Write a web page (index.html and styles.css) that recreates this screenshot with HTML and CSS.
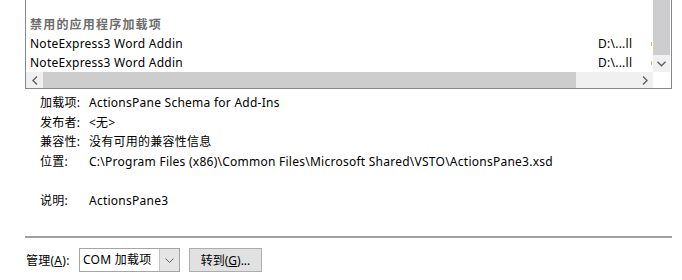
FILE: index.html
```html
<!DOCTYPE html>
<html lang="zh-CN">
<head>
    <meta charset="UTF-8">
    <title>COM 加载项</title>
    <link rel="stylesheet" href="styles.css">
</head>
<body>
    <div class="addin-list">
        <div class="list-body">
            <div class="group-header">禁用的应用程序加载项</div>
            <div class="list-row">
                <span class="col-name">NoteExpress3 Word Addin</span>
                <span class="col-path">D:\...ll</span>
                <span class="col-type"></span>
            </div>
            <div class="list-row">
                <span class="col-name">NoteExpress3 Word Addin</span>
                <span class="col-path">D:\...ll</span>
                <span class="col-type"></span>
            </div>
        </div>
        <div class="vscroll">
            <div class="vthumb"></div>
            <div class="arrow-btn">
                <svg width="9" height="6" viewBox="0 0 9 6"><path d="M0.5 0.8 L4.5 4.8 L8.5 0.8" fill="none" stroke="#606060" stroke-width="1.4"/></svg>
            </div>
        </div>
        <div class="hscroll">
            <div class="arrow-btn">
                <svg width="6" height="9" viewBox="0 0 6 9"><path d="M5 0.5 L1 4.5 L5 8.5" fill="none" stroke="#606060" stroke-width="1.4"/></svg>
            </div>
            <div class="hthumb"></div>
            <div class="htrack"></div>
            <div class="arrow-btn">
                <svg width="6" height="9" viewBox="0 0 6 9"><path d="M1 0.5 L5 4.5 L1 8.5" fill="none" stroke="#606060" stroke-width="1.4"/></svg>
            </div>
        </div>
        <div class="corner"></div>
    </div>

    <div class="details">
        <span class="label">加载项:</span><span>ActionsPane Schema for Add-Ins</span>
        <span class="label">发布者:</span><span>&lt;无&gt;</span>
        <span class="label">兼容性:</span><span>没有可用的兼容性信息</span>
        <span class="label">位置:</span><span>C:\Program Files (x86)\Common Files\Microsoft Shared\VSTO\ActionsPane3.xsd</span>
        <span class="label"></span><span></span>
        <span class="label">说明:</span><span>ActionsPane3</span>
    </div>

    <div class="separator"></div>

    <div class="manage-bar">
        <span class="manage-label">管理(<u>A</u>):</span>
        <div class="combo">
            <span class="combo-value">COM 加载项</span>
            <span class="combo-btn">
                <svg width="9" height="5" viewBox="0 0 9 5"><path d="M0.5 0.5 L4.5 4.5 L8.5 0.5" fill="none" stroke="#606060" stroke-width="1"/></svg>
            </span>
        </div>
        <button class="go-button">转到(<u>G</u>)...</button>
    </div>
</body>
</html>
```

FILE: styles.css
```css
body {
    margin: 0;
    padding: 0;
    background: #fff;
    font-family: "Noto Sans", "Noto Sans CJK SC", sans-serif;
    font-size: 12px;
    letter-spacing: 0.25px;
    color: #000;
}

.addin-list {
    box-sizing: border-box;
    width: 647px;
    height: 89px;
    margin-left: 25px;
    border: 1px solid #828790;
    border-top: none;
    padding-right: 1px;
    display: grid;
    grid-template-columns: 1fr 17px;
    grid-template-rows: 1fr 16px;
}

.list-body {
    overflow: hidden;
    padding-top: 15px;
}

.group-header {
    height: 19px;
    line-height: 19px;
    padding-left: 4px;
    color: #6d6d6d;
    font-weight: bold;
    letter-spacing: 1.2px;
}

.list-row {
    display: flex;
    height: 19px;
    line-height: 19px;
    white-space: nowrap;
}

.col-name {
    width: 568px;
    padding-left: 4px;
}

.col-path {
    width: 53px;
}

.col-type {
    width: 1px;
    height: 4px;
    margin-top: 8px;
    background: #f5b04a;
}

.vscroll {
    display: flex;
    flex-direction: column;
    background: #f0f0f0;
}

.vthumb {
    flex: 1;
    background: #cdcdcd;
}

.arrow-btn {
    width: 17px;
    height: 17px;
    display: flex;
    align-items: center;
    justify-content: center;
    background: #f0f0f0;
    flex-shrink: 0;
}

.hscroll {
    display: flex;
    background: #f0f0f0;
}

.hscroll .arrow-btn {
    height: 16px;
}

.hthumb {
    width: 533px;
    background: #cdcdcd;
}

.htrack {
    flex: 1;
}

.corner {
    background: #fff;
}

.details {
    display: grid;
    grid-template-columns: 49px auto;
    padding-left: 40px;
    margin-top: 4px;
    line-height: 19.5px;
}

.details span {
    min-height: 19.5px;
    white-space: nowrap;
}

.separator {
    height: 2px;
    width: 647px;
    margin: 26px 0 0 25px;
    background: #a0a0a0;
}

.manage-bar {
    display: flex;
    align-items: center;
    margin: 10px 0 0 26px;
}

.manage-label {
    width: 53px;
}

.combo {
    box-sizing: border-box;
    display: flex;
    width: 101px;
    height: 24px;
    border: 1px solid #a5a5a5;
}

.combo-value {
    flex: 1;
    line-height: 22px;
    padding-left: 3px;
}

.combo-btn {
    width: 19px;
    display: flex;
    align-items: center;
    justify-content: center;
    background: #e5e5e5;
    border-left: 1px solid #c5c5c5;
}

.go-button {
    box-sizing: border-box;
    margin-left: 9px;
    width: 73px;
    height: 24px;
    font: inherit;
    color: #000;
    background: #e1e1e1;
    border: 1px solid #adadad;
    padding: 0;
}
```
